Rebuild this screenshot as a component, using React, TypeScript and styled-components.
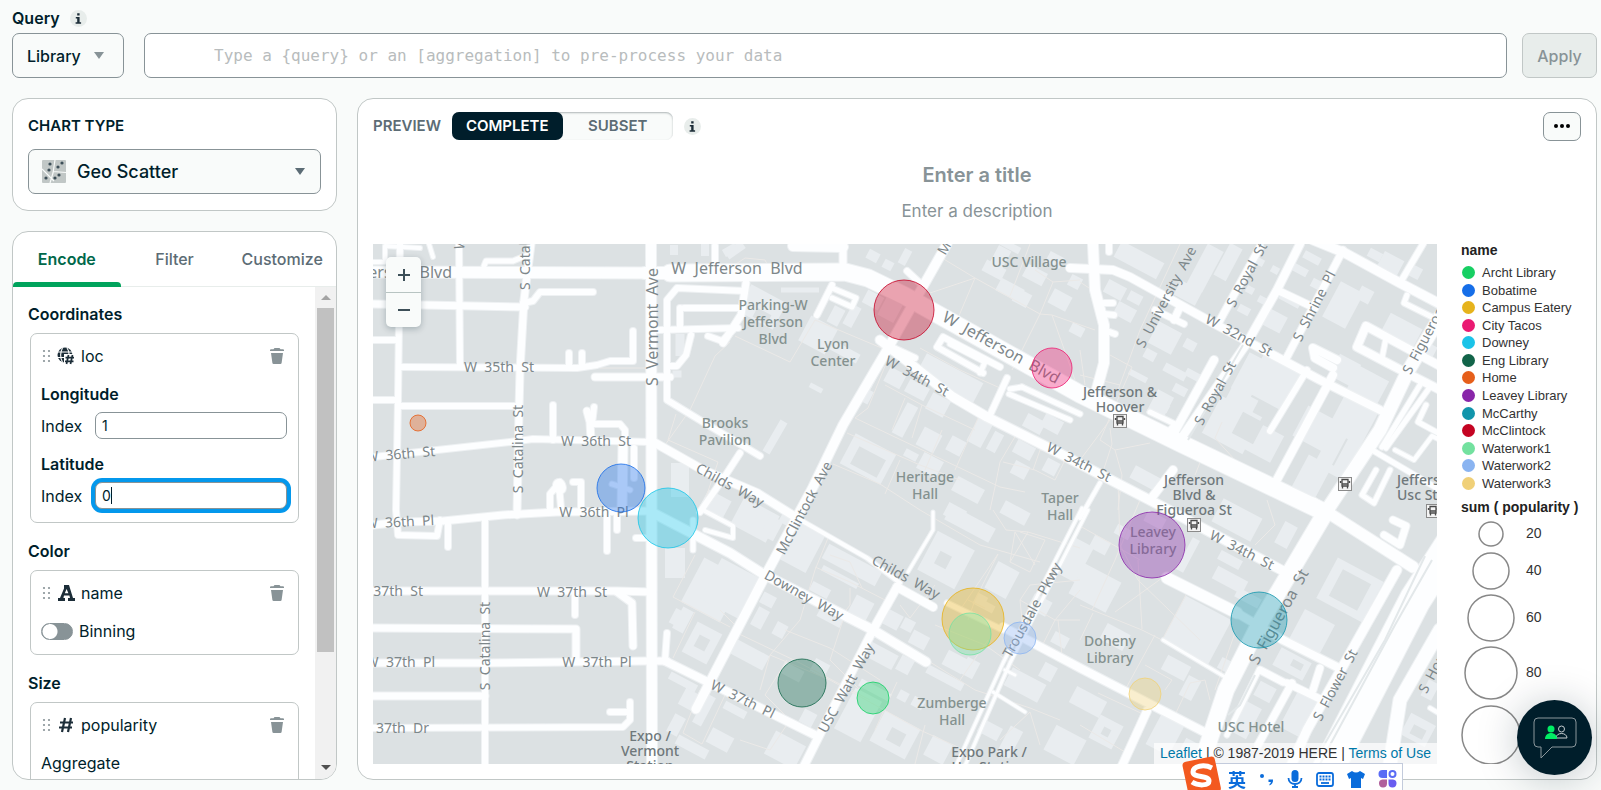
import React from 'react';
import styled, { createGlobalStyle, css } from 'styled-components';

const GlobalStyle = createGlobalStyle`
  *, *::before, *::after { box-sizing: border-box; }
  body {
    margin: 0;
    background: #f9fbfa;
    color: #001e2b;
    font-family: Inter, "Liberation Sans", sans-serif;
    font-size: 16px;
    line-height: 20px;
  }
  button, input, select { font: inherit; color: inherit; }
`;

/* ---------- page frame ---------- */

const Page = styled.div`
  display: flex;
  flex-direction: column;
  height: 100vh;
  min-height: 600px;
  padding: 8px 4px 10px 12px;
  overflow: hidden;
`;

const QueryHeading = styled.div`
  display: flex;
  align-items: center;
  gap: 10px;
  height: 20px;
  margin-bottom: 5px;
  font-weight: 600;
`;

const QueryRow = styled.div`
  display: flex;
  height: 45px;
  margin-bottom: 20px;
`;

const LibraryButton = styled.button`
  display: flex;
  align-items: center;
  justify-content: space-between;
  width: 112px;
  margin-right: 20px;
  padding: 0 19px 0 14px;
  border: 1px solid #889397;
  border-radius: 7px;
  background: #f9fbfa;
  font-weight: 500;
`;

const QueryInput = styled.input`
  flex: 1;
  min-width: 0;
  margin-right: 15px;
  padding: 0 69px;
  border: 1px solid #889397;
  border-radius: 7px;
  background: #fff;
  font-family: "DejaVu Sans Mono", monospace;
  &::placeholder { color: #b8bcbd; opacity: 1; }
`;

const ApplyButton = styled.button`
  width: 75px;
  padding: 0;
  border: 1px solid #c1c7c6;
  border-radius: 7px;
  background: #e8edeb;
  color: #889397;
  font-weight: 500;
`;

const Columns = styled.div`
  display: flex;
  flex: 1;
  gap: 20px;
  min-height: 0;
`;

const Sidebar = styled.aside`
  display: flex;
  flex-direction: column;
  flex: none;
  gap: 20px;
  width: 325px;
`;

const panel = css`
  border: 1px solid #c1c7c6;
  border-radius: 16px;
  background: #fff;
`;

const InfoBadge = styled.button`
  display: grid;
  place-items: center;
  width: 17px;
  height: 17px;
  padding: 0;
  border: 0;
  border-radius: 50%;
  background: #e8edeb;
`;

/* ---------- chart type ---------- */

const ChartTypePanel = styled.section`
  ${panel}
  height: 113px;
  padding: 17px 15px 0;
`;

const ChartTypeTitle = styled.label`
  display: block;
  margin-bottom: 13px;
  font-size: 15px;
  font-weight: 600;
`;

const SelectFrame = styled.div`
  display: grid;
  grid-template-columns: 48px 1fr 34px;
  align-items: center;
  height: 45px;
  border: 1px solid #889397;
  border-radius: 7px;
  background: #f9fbfa;
  & > svg { grid-row: 1; pointer-events: none; }
  & > svg:first-child { grid-column: 1; margin-left: 13px; }
  & > svg:last-child { grid-column: 3; z-index: 1; margin-left: 9px; }
`;

const ChartSelect = styled.select`
  grid-row: 1;
  grid-column: 2 / 4;
  width: 100%;
  height: 43px;
  padding: 0;
  border: 0;
  outline: 0;
  appearance: none;
  background: transparent;
  font-size: 18px;
  font-weight: 500;
`;

/* ---------- encode panel ---------- */

const EncodePanel = styled.section`
  ${panel}
  display: flex;
  flex: 1;
  flex-direction: column;
  min-height: 0;
  overflow: hidden;
`;

const Tabs = styled.div`
  display: flex;
  flex: none;
  height: 55px;
  border-bottom: 1px solid #e8edeb;
`;

const Tab = styled.button<{ $active?: boolean }>`
  position: relative;
  flex: 1;
  padding: 0;
  border: 0;
  background: none;
  color: ${p => (p.$active ? '#00684a' : '#5c6c75')};
  font-weight: ${p => (p.$active ? 600 : 500)};
  &::after {
    content: "";
    position: absolute;
    right: 0;
    bottom: -1px;
    left: 0;
    height: 5px;
    border-radius: 4px 4px 0 0;
    background: ${p => (p.$active ? '#00a35c' : 'transparent')};
  }
`;

const ScrollArea = styled.div`
  display: flex;
  flex: 1;
  min-height: 0;
`;

const Sections = styled.div`
  flex: 1;
  padding: 17px 15px 0;
  overflow: hidden;
`;

const ScrollTrack = styled.div`
  display: flex;
  flex-direction: column;
  align-items: center;
  justify-content: space-between;
  flex: none;
  width: 21px;
  padding: 8px 0 9px;
  background: #f1f1f1;
`;

const ScrollThumb = styled.div`
  flex: 0 1 344px;
  width: 17px;
  margin: 8px 0 auto;
  background: #c1c1c1;
`;

const SectionTitle = styled.h3`
  margin: 0 0 9px;
  font-size: 16px;
  font-weight: 600;
  line-height: 20px;
`;

const Card = styled.div`
  margin: 0 0 18px 2px;
  padding: 10px 11px 13px 10px;
  width: 269px;
  border: 1px solid #c1c7c6;
  border-radius: 7px;
`;

const FieldRow = styled.div`
  display: flex;
  align-items: center;
  height: 24px;
  & > svg:first-child { margin: 0 6px 0 1px; }
`;

const FieldName = styled.span`
  flex: 1;
  margin-left: 6px;
`;

const IconButton = styled.button`
  display: grid;
  place-items: center;
  width: 20px;
  height: 24px;
  padding: 0;
  border: 0;
  background: none;
`;

const AxisTitle = styled.div`
  margin: 16px 0 8px;
  font-weight: 600;
`;

const IndexLabel = styled.label`
  display: flex;
  align-items: center;
  justify-content: space-between;
  & + div { margin-top: 15px; }
`;

const IndexInput = styled.input<{ $focused?: boolean }>`
  width: 192px;
  height: 27px;
  padding: 0 6px;
  border: 1px solid #889397;
  border-radius: 7px;
  outline: 0;
  background: #fff;
  box-shadow: ${p => (p.$focused ? '0 0 0 4px #0498ec' : 'none')};
  font-size: 14px;
`;

const InputShell = styled.span`
  position: relative;
  display: flex;
`;

const Caret = styled.span`
  position: absolute;
  top: 5px;
  left: 16px;
  width: 1px;
  height: 17px;
  background: #001e2b;
`;

const SwitchLabel = styled.label`
  display: flex;
  align-items: center;
  gap: 6px;
  margin-top: 16px;
`;

const Switch = styled.input`
  width: 32px;
  height: 17px;
  margin: 0;
  border: 1px solid #889397;
  border-radius: 9px;
  appearance: none;
  background: radial-gradient(circle at 8px 50%, #fff 7px, #889397 8px);
`;

const PlainLabel = styled.div`
  margin-top: 16px;
`;

/* ---------- preview ---------- */

const Preview = styled.main`
  ${panel}
  display: flex;
  flex: 1;
  flex-direction: column;
  min-width: 0;
  padding: 12px 15px 15px;
`;

const PreviewBar = styled.div`
  display: flex;
  align-items: center;
  height: 30px;
  color: #5c6c75;
  font-weight: 600;
`;

const PreviewLabel = styled.span`
  width: 79px;
  font-size: 15px;
`;

const Segments = styled.div`
  display: flex;
  width: 221px;
  height: 28px;
  margin-right: 11px;
  border-radius: 7px;
  background: #f9fbfa;
  box-shadow: inset 0 1px 2px #aeb5b6;
`;

const Segment = styled.button<{ $active?: boolean }>`
  flex: 1;
  padding: 0;
  border: 0;
  border-radius: 7px;
  background: ${p => (p.$active ? '#001e2b' : 'transparent')};
  color: ${p => (p.$active ? '#fff' : '#5c6c75')};
  font-size: 15px;
  font-weight: 600;
`;

const MoreButton = styled.button`
  display: grid;
  place-items: center;
  width: 38px;
  height: 29px;
  margin-left: auto;
  padding: 0;
  border: 1px solid #889397;
  border-radius: 7px;
  background: #f9fbfa;
`;

const ChartTitle = styled.h1`
  margin: 20px 0 0;
  color: #889397;
  font-size: 20px;
  font-weight: 600;
  line-height: 28px;
  text-align: center;
`;

const ChartDescription = styled.p`
  margin: 8px 0 19px;
  color: #889397;
  font-size: 17px;
  line-height: 28px;
  text-align: center;
`;

const ChartBody = styled.div`
  display: flex;
  flex: 1;
  min-height: 0;
`;

const MapFrame = styled.div`
  position: relative;
  flex: 1;
  min-width: 0;
  overflow: hidden;
  background: #dce1e3;
`;

const MapSvg = styled.svg`
  display: block;
  width: 100%;
  height: 100%;
`;

const StreetName = styled.text<{ $major?: boolean }>`
  fill: #7d878a;
  font: ${p => (p.$major ? 16 : 14)}px/1 "Noto Sans", sans-serif;
  white-space: pre;
`;

const PlaceName = styled.text<{ $station?: boolean }>`
  fill: ${p => (p.$station ? '#6f787b' : '#84918f')};
  font: 500 14px/1 "Noto Sans", sans-serif;
  white-space: pre;
`;

const ZoomControl = styled.div`
  position: absolute;
  top: 13px;
  left: 13px;
  display: flex;
  flex-direction: column;
  width: 35px;
  border-radius: 5px;
  background: #f9fbfa;
  box-shadow: 0 2px 6px rgba(0, 30, 43, 0.25);
`;

const ZoomButton = styled.button`
  display: grid;
  place-items: center;
  height: 35px;
  padding: 0;
  border: 0;
  background: none;
  & + & { border-top: 1px solid #b8c4c2; }
`;

const Attribution = styled.div`
  position: absolute;
  right: 0;
  bottom: 0;
  padding: 0 6px;
  background: rgba(255, 255, 255, 0.7);
  color: #333;
  font: 14px/21px "Liberation Sans", sans-serif;
  & a { color: #0078a8; text-decoration: none; }
`;

const Legend = styled.div`
  flex: none;
  width: 144px;
  padding-left: 24px;
  overflow: hidden;
  color: #333;
  font: 13px/17px "Liberation Sans", sans-serif;
`;

const LegendTitle = styled.div`
  height: 17px;
  margin-top: -2px;
  margin-bottom: 5px;
  color: #222;
  font-size: 14px;
  font-weight: 700;
  white-space: nowrap;
  & + svg { display: block; }
`;

const LegendList = styled.ul`
  display: grid;
  grid-template-rows: repeat(13, 1fr);
  height: 228px;
  margin: 0 0 9px;
  padding: 0 0 0 1px;
  list-style: none;
`;

const LegendItem = styled.li<{ $color: string }>`
  display: flex;
  align-items: center;
  gap: 7px;
  &::before {
    content: "";
    width: 13px;
    height: 13px;
    border-radius: 50%;
    background: ${p => p.$color};
  }
`;

const LegendNumber = styled.text`
  fill: #333;
  font: 14px "Liberation Sans", sans-serif;
`;

/* ---------- floating pieces ---------- */

const ChatButton = styled.button`
  position: fixed;
  right: 9px;
  bottom: 15px;
  display: grid;
  place-items: center;
  width: 75px;
  height: 75px;
  padding: 0;
  border: 0;
  border-radius: 50%;
  background: #001e2b;
  box-shadow: 0 4px 40px rgba(0, 30, 43, 0.25);
`;

const ImeBar = styled.div`
  position: fixed;
  right: 198px;
  bottom: 0;
  display: flex;
  align-items: center;
  justify-content: space-between;
  width: 206px;
  height: 27px;
  padding: 4px 5px 0 30px;
  border: 1px solid #c3cbdc;
  border-bottom: 0;
  background: #fff;
  color: #0a6cdb;
  font: 700 18px/20px "Noto Sans CJK SC", sans-serif;
`;

const ImeLogo = styled.svg`
  position: absolute;
  bottom: -8px;
  left: -17px;
`;

/* ---------- map data ---------- */

type Street = [number, string];

const streets: Street[] = [
  [12, '373,272 650,273'],
  [18, '670,273 845,272 868,278 905,296 1080,394 1180,443 1320,510'],
  [13, '645,273 690,273'],
  [11, '651,240 652,764'],
  [7, '400,244 398,400 396,510 398,535 437,536 440,520'],
  [7, '459,244 460,367'],
  [8, '531,244 524,300 520,370 519,410 517,515'],
  [8, '373,304 525,307'],
  [7, '373,340 398,340'],
  [7, '400,367 577,368 597,365 610,361 633,361 633,331'],
  [7, '569,353 569,367'],
  [7, '582,353 582,367'],
  [8, '595,377 670,377'],
  [7, '373,400 398,400'],
  [7, '400,406 517,406'],
  [7, '373,457 410,453 510,442 533,439 650,442'],
  [7, '553,405 553,440'],
  [8, '587,411 590,422 591,440'],
  [7, '594,407 592,424 620,424 625,430 625,440'],
  [6, '484,266 486,261 513,261 530,254'],
  [7, '593,292 540,292 533,301 523,303'],
  [5, '373,262 385,262 385,246 420,248'],
  [5, '429,244 433,257'],
  [7, '485,518 485,764'],
  [8, '373,525 403,522 443,521 503,515 557,512 652,511'],
  [7, '448,522 448,547'],
  [7, '550,512 550,494 560,482'],
  [13, '559,485 560,488'],
  [7, '559,485 561,508'],
  [7, '573,482 581,482 581,508'],
  [10, '623,447 622,510'],
  [7, '634,448 634,478'],
  [6, '612,484 630,490'],
  [7, '607,513 607,551'],
  [7, '617,513 617,530'],
  [7, '636,538 652,538'],
  [8, '373,591 617,591 652,592'],
  [8, '617,592 632,603 633,646'],
  [7, '575,593 575,615'],
  [8, '373,628 576,629 576,660'],
  [8, '373,663 485,663 647,661 667,661'],
  [9, '665,661 720,688 817,736'],
  [7, '667,633 665,660'],
  [8, '373,696 485,696'],
  [7, '373,728 623,727 630,720 630,702'],
  [7, '610,712 630,712'],
  [10, '947,244 900,327 887,350 843,425 813,487 763,580 696,709'],
  [9, '897,587 873,630 817,740 803,768'],
  [9, '650,440 703,470 757,493 797,518'],
  [5, '797,518 867,558 900,583'],
  [9, '897,587 933,607'],
  [6, '947,603 1003,630'],
  [9, '1003,627 1080,668 1210,735'],
  [10, '653,513 730,553 763,574 873,630 926,662'],
  [7, '745,291 677,288 667,300 667,400 703,422 760,456'],
  [7, '740,453 727,473 700,512'],
  [7, '680,308 680,327'],
  [7, '684,308 742,308'],
  [7, '658,330 738,328'],
  [8, '746,283 741,315 723,343'],
  [7, '691,335 686,355 677,366 667,366'],
  [7, '708,336 722,341 733,330'],
  [5, '703,510 733,526 733,538 705,530'],
  [6, '693,520 693,550'],
  [8, '843,244 843,270'],
  [11, '793,246 843,247'],
  [7, '715,246 715,270'],
  [7, '832,285 817,315'],
  [6, '832,288 856,298 852,307 832,298'],
  [10, '880,340 953,397 987,417 1053,450 1080,464 1163,507 1287,573'],
  [7, '887,345 915,358'],
  [7, '983,373 937,347 943,337 1000,367'],
  [6, '950,344 985,362 980,373'],
  [7, '1007,378 990,415'],
  [6, '1009,394 1070,420'],
  [6, '1022,387 1080,414'],
  [6, '1010,389 1022,387'],
  [7, '907,271 922,285'],
  [11, '1093,244 1095,290 1104,325 1104,363 1095,396'],
  [9, '1070,268 1113,270 1130,277 1213,323 1320,380 1380,410'],
  [7, '1109,244 1109,252'],
  [7, '1104,303 1113,303'],
  [7, '1104,314 1114,315'],
  [7, '1104,330 1115,334'],
  [7, '1155,310 1184,324'],
  [8, '1180,307 1174,320'],
  [9, '1300,244 1277,290 1247,343 1180,440'],
  [9, '1214,360 1174,433'],
  [8, '1260,247 1219,322'],
  [8, '1277,290 1315,308'],
  [8, '1343,250 1287,357'],
  [10, '1313,240 1345,253 1400,283 1440,304'],
  [7, '1423,244 1400,283'],
  [6, '1407,295 1404,303 1440,321'],
  [6, '1150,412 1175,424 1166,434'],
  [7, '1307,370 1270,431'],
  [9, '1333,375 1273,487'],
  [9, '1333,368 1315,358 1313,348 1337,360'],
  [14, '1440,317 1407,373 1380,430 1327,510'],
  [17, '1327,510 1260,623 1226,690 1200,768'],
  [9, '1440,390 1397,368 1357,347 1366,326 1440,366'],
  [6, '1386,338 1382,358'],
  [6, '1367,447 1440,490'],
  [6, '1430,387 1386,448'],
  [6, '1420,385 1382,447'],
  [5, '1395,450 1414,460 1432,436 1440,440'],
  [6, '1426,405 1418,422 1440,434'],
  [6, '1376,470 1362,495 1374,503 1390,470'],
  [12, '1313,503 1413,567'],
  [8, '1393,520 1406,526 1400,545 1384,535'],
  [10, '1397,570 1307,730 1290,768'],
  [32, '1460,530 1415,600 1325,775'],
  [14, '1440,630 1400,700 1390,764'],
  [12, '1167,578 1237,613'],
  [9, '1237,613 1283,640 1337,667'],
  [8, '1260,670 1283,682'],
  [8, '1287,683 1320,699'],
  [8, '1292,683 1258,745'],
  [8, '1320,668 1313,690'],
  [6, '1258,672 1227,735'],
  [4, '1163,640 1225,677 1230,690'],
  [4, '1082,508 1003,663 955,768'],
  [4, '1088,510 1010,663 964,768'],
  [4, '1005,670 1015,675'],
  [4, '993,692 1025,712'],
  [9, '1147,711 1121,768'],
  [4, '933,512 933,530 908,572'],
  [9, '1173,470 1153,496'],
  [5, '1100,483 1080,518'],
  [5, '1430,708 1450,720'],
];

type Block = [number, number, number, number, number?];

const blocks: Block[] = [
  [674, 250, 8, 10, 0], [705, 250, 8, 12, 0], [735, 250, 20, 9, -35], [680, 345, 9, 22, 0], [677, 374, 9, 7, 0],
  [680, 480, 18, 34, 0], [675, 563, 20, 30, 0], [712, 590, 44, 50], [702, 643, 28, 34], [676, 617, 8, 16],
  [683, 620, 12, 24], [683, 682, 30, 8], [690, 700, 18, 18], [704, 710, 10, 32], [676, 725, 12, 20],
  [692, 747, 34, 10], [720, 740, 24, 16], [715, 505, 26, 22], [755, 520, 40, 30],
  [762, 307, 40, 30], [800, 290, 38, 5, 0], [818, 335, 30, 28], [836, 316, 12, 18], [845, 352, 30, 10], [852, 316, 10, 22],
  [730, 250, 14, 8, -30], [775, 437, 8, 36, 30], [816, 388, 14, 5], [873, 300, 18, 14], [890, 310, 18, 20],
  [873, 256, 12, 10], [888, 265, 10, 9], [905, 257, 8, 16], [950, 378, 64, 22], [870, 382, 8, 16], [868, 397, 6, 14],
  [895, 378, 18, 16], [917, 390, 22, 14], [938, 405, 20, 18], [905, 420, 12, 34], [929, 440, 20, 20], [956, 446, 16, 16],
  [980, 432, 16, 28], [995, 442, 10, 20], [1024, 450, 20, 14], [1020, 470, 16, 14], [1034, 424, 20, 14], [1052, 424, 20, 14],
  [868, 459, 46, 34], [911, 455, 14, 8], [930, 465, 22, 18], [968, 490, 30, 16], [1051, 467, 14, 14], [1015, 513, 28, 14],
  [970, 524, 50, 16], [955, 513, 20, 14], [800, 545, 36, 44], [760, 522, 12, 22], [775, 530, 7, 22], [787, 518, 12, 14],
  [852, 565, 60, 16], [840, 577, 40, 6], [946, 560, 42, 44], [1002, 580, 24, 30], [985, 603, 22, 12],
  [820, 590, 20, 10], [830, 618, 26, 9], [861, 608, 20, 20], [893, 620, 16, 16], [908, 625, 12, 12], [919, 640, 18, 14],
  [768, 600, 14, 12], [760, 618, 12, 20], [780, 630, 12, 14], [733, 590, 50, 46], [750, 655, 36, 16], [792, 672, 22, 12],
  [820, 668, 16, 14], [880, 655, 34, 16], [905, 665, 14, 16], [945, 678, 40, 9], [955, 662, 22, 16], [970, 668, 14, 18],
  [858, 715, 30, 46], [875, 690, 34, 8], [903, 696, 10, 10], [918, 703, 12, 10], [895, 735, 40, 34], [938, 750, 22, 22],
  [785, 750, 34, 26], [808, 718, 14, 14], [735, 710, 24, 8], [1025, 685, 38, 20], [1048, 672, 14, 16], [990, 730, 22, 14],
  [1010, 742, 14, 30], [1065, 745, 34, 28], [1040, 605, 20, 16], [1075, 560, 22, 40], [1060, 640, 16, 12],
  [994, 270, 22, 12], [1010, 290, 26, 14], [1000, 258, 14, 22], [1035, 275, 22, 14], [1022, 298, 16, 14], [1060, 300, 20, 16],
  [1055, 260, 16, 12], [1075, 282, 12, 12], [1077, 330, 14, 10], [1010, 246, 22, 7],
  [1139, 260, 48, 18], [1115, 290, 20, 14], [1135, 298, 14, 10], [1125, 312, 20, 14], [1205, 268, 18, 46], [1188, 293, 24, 16],
  [1165, 338, 26, 24], [1150, 355, 12, 10], [1190, 345, 12, 10], [1138, 376, 20, 6], [1175, 372, 24, 9], [1180, 390, 14, 9],
  [1193, 375, 16, 8], [1160, 405, 18, 26], [1163, 407, 12, 8], [1228, 262, 14, 36], [1260, 262, 8, 7], [1275, 270, 8, 7],
  [1250, 290, 8, 7], [1262, 300, 8, 7], [1244, 310, 12, 8], [1273, 320, 24, 18], [1250, 375, 22, 40], [1275, 380, 44, 48],
  [1232, 425, 46, 42], [1263, 442, 32, 30], [1242, 400, 30, 14], [1300, 270, 16, 8], [1318, 285, 14, 9], [1312, 258, 18, 8],
  [1343, 305, 26, 40], [1365, 295, 14, 14], [1290, 300, 22, 8], [1390, 265, 22, 20], [1375, 255, 14, 9], [1415, 272, 12, 12],
  [1345, 370, 24, 24], [1368, 385, 34, 26], [1352, 422, 38, 46], [1318, 430, 40, 34], [1310, 480, 26, 44], [1338, 455, 34, 40],
  [1402, 330, 36, 20], [1425, 350, 20, 16], [1350, 590, 52, 46], [1312, 632, 34, 34], [1237, 520, 44, 26], [1286, 535, 14, 24],
  [1230, 580, 34, 14], [1248, 598, 26, 10], [1230, 560, 24, 10], [1188, 555, 8, 36], [1145, 478, 28, 14],
  [1197, 630, 52, 50], [1095, 588, 42, 34], [1100, 545, 18, 14], [1155, 520, 20, 12], [1123, 532, 16, 10],
  [1292, 664, 34, 20], [1265, 692, 18, 16], [1300, 715, 26, 40], [1246, 720, 18, 34], [1176, 668, 26, 16], [1190, 688, 14, 22],
  [1115, 637, 26, 18], [1103, 680, 14, 8], [1088, 702, 34, 18], [1106, 732, 26, 26], [1165, 735, 26, 34], [1190, 750, 18, 18],
  [1418, 730, 28, 24], [1430, 690, 12, 18], [1225, 665, 12, 12],
];

const cutouts: Block[] = [
  [943, 560, 13, 14], [702, 643, 12, 13], [994, 600, 12, 10], [868, 462, 30, 20], [1350, 590, 32, 30], [1297, 665, 12, 7],
  [1340, 452, 2, 30], [1248, 428, 24, 24], [896, 737, 16, 14], [762, 316, 16, 10], [1106, 732, 8, 8], [1418, 732, 14, 10],
];

const trails: string[] = [
  '600,368 648,368', '730,342 715,356 690,410 665,445', '676,414 668,440 718,462 705,500', '735,336 790,362 815,320 910,360',
  '730,268 745,258 765,260 770,270', '885,366 868,408 855,418', '942,258 975,278 930,293', '975,278 958,318',
  '975,278 1040,314 1052,315 1095,330', '1040,314 1012,370', '1052,315 1075,380', '1010,296 1030,244', '1035,270 1053,282 1080,280',
  '1053,282 1040,314', '855,418 1000,487 1025,492', '847,433 920,465 960,480', '905,398 892,430', '920,348 960,370 1000,388',
  '885,385 922,405 912,438', '922,405 975,430', '978,418 955,470', '942,430 925,470', '1016,435 1000,462 995,487 990,510',
  '1003,462 1035,470 1055,480 1070,450', '1033,470 1040,450 1060,448 1080,460', '900,460 885,494',
  '833,464 880,484 920,510 980,545 1040,562', '993,510 1006,530 1028,532 1080,548', '1028,532 1010,562 1030,572 1045,540 1020,532',
  '1010,562 1015,532 1035,565', '998,554 975,600 968,620', '998,554 960,610', '968,600 985,608',
  '828,538 815,570 800,620 770,655 760,690', '815,567 850,582 885,600', '850,588 850,605 840,618',
  '830,555 850,562 862,588', '785,630 830,648 880,680', '843,620 830,660 860,690', '735,632 800,663 870,700',
  '720,610 740,630', '770,655 830,680 920,730 960,748', '787,660 765,695 790,720 770,750 740,740',
  '900,605 910,618 935,585', '935,625 985,645 1020,670', '988,640 960,680', '930,662 975,690 1030,708 1060,720',
  '897,682 875,730', '925,725 915,764', '1000,740 1030,712 1040,745', '1020,600 1055,620 1080,620',
  '1020,600 1030,585 1080,580', '1055,620 1080,590', '1058,620 1062,655 1080,670', '1055,620 1040,650', '1024,640 1020,600',
  '695,555 673,597 730,627', '695,612 673,658', '700,690 683,733 702,744 725,695',
  '1180,244 1140,330 1118,390', '1080,282 1095,292', '1110,355 1132,367 1100,440 1115,450 1150,443',
  '1110,428 1112,444 1097,490', '1115,450 1122,475 1118,510', '1080,460 1110,420', '1080,350 1085,385',
  '1080,375 1120,385', '1118,480 1120,545 1138,580 1200,640', '1138,560 1142,629', '1140,500 1115,560 1092,610',
  '1115,612 1180,565', '1080,526 1140,560', '1080,605 1142,630 1162,640', '1187,593 1162,640', '1155,635 1125,690',
  '1236,630 1215,690', '1098,693 1145,715', '1145,665 1172,680 1165,690', '1190,683 1205,680 1210,700',
  '1190,683 1175,715', '1267,500 1275,525 1255,545', '1222,422 1215,438 1235,460', '1205,450 1195,475',
  '1093,613 1080,640', '1080,725 1130,755',
];

type Label = { t: string; x: number; y: number; r?: number; a?: 'start' | 'end'; major?: boolean };

const streetNames: Label[] = [
  { t: 'Jefferson  Blvd', x: 452, y: 273, a: 'end', major: true },
  { t: 'W  Jefferson  Blvd', x: 737, y: 269, major: true },
  { t: 'S  Catalina', x: 525, y: 290, r: -90, a: 'start' },
  { t: 'W', x: 460, y: 243, r: -80 },
  { t: 'S  Vermont  Ave', x: 653, y: 327, r: -90, major: true },
  { t: 'W  35th  St', x: 499, y: 367 },
  { t: 'S  Catalina  St', x: 518, y: 449, r: -90 },
  { t: 'W  36th  St', x: 435, y: 451, r: -5, a: 'end' },
  { t: 'W  36th  St', x: 596, y: 441 },
  { t: 'W  36th  Pl', x: 434, y: 520, r: -3, a: 'end' },
  { t: 'W  36th  Pl', x: 594, y: 512 },
  { t: 'W  37th  St', x: 423, y: 591, a: 'end' },
  { t: 'W  37th  St', x: 572, y: 592 },
  { t: 'S  Catalina  St', x: 485, y: 646, r: -90 },
  { t: 'W  37th  Pl', x: 435, y: 662, a: 'end' },
  { t: 'W  37th  Pl', x: 597, y: 662 },
  { t: 'W  37th  Dr', x: 429, y: 728, a: 'end' },
  { t: 'Childs  Way', x: 730, y: 485, r: 29 },
  { t: 'McClintock  Ave', x: 804, y: 508, r: -62 },
  { t: 'Downey  Way', x: 804, y: 595, r: 29 },
  { t: 'Childs  Way', x: 906, y: 577, r: 29 },
  { t: 'USC  Watt  Way', x: 846, y: 688, r: -61 },
  { t: 'Trousdale  Pkwy', x: 1032, y: 610, r: -61 },
  { t: 'W  37th  Pl', x: 743, y: 699, r: 26 },
  { t: 'W  Jefferson  Blvd', x: 1001, y: 348, r: 29, major: true },
  { t: 'W  34th  St', x: 917, y: 376, r: 28 },
  { t: 'W  34th  St', x: 1079, y: 462, r: 27 },
  { t: 'W  34th  St', x: 1242, y: 550, r: 27 },
  { t: 'M', x: 944, y: 248, r: -60 },
  { t: 'S  University  Ave', x: 1166, y: 297, r: -62 },
  { t: 'S  Royal  St', x: 1230, y: 306, r: -62, a: 'start' },
  { t: 'W  32nd  St', x: 1239, y: 335, r: 28 },
  { t: 'S  Royal  St', x: 1215, y: 393, r: -61 },
  { t: 'S  Shrine  Pl', x: 1314, y: 306, r: -63 },
  { t: 'S  Figueroa  St', x: 1406, y: 373, r: -62, a: 'start' },
  { t: 'S  Figueroa  St', x: 1279, y: 617, r: -61, major: true },
  { t: 'S  Flower  St', x: 1335, y: 685, r: -62 },
  { t: 'S  Hope  St', x: 1422, y: 692, r: -62, a: 'start' },
];

type Place = { x: number; y: number; lines: string[]; station?: boolean; start?: boolean };

const places: Place[] = [
  { x: 773, y: 310, lines: ['Parking-W', 'Jefferson', 'Blvd'] },
  { x: 833, y: 349, lines: ['Lyon', 'Center'] },
  { x: 725, y: 428, lines: ['Brooks', 'Pavilion'] },
  { x: 1029, y: 267, lines: ['USC Village'] },
  { x: 925, y: 482, lines: ['Heritage', 'Hall'] },
  { x: 1060, y: 503, lines: ['Taper', 'Hall'] },
  { x: 1110, y: 646, lines: ['Doheny', 'Library'] },
  { x: 1153, y: 537, lines: ['Leavey', 'Library'] },
  { x: 952, y: 708, lines: ['Zumberge', 'Hall'] },
  { x: 1251, y: 732, lines: ['USC Hotel'] },
  { x: 650, y: 741, lines: ['Expo /', 'Vermont', 'Station'], station: true },
  { x: 989, y: 757, lines: ['Expo Park /', 'Usc Station'], station: true },
  { x: 1120, y: 397, lines: ['Jefferson &', 'Hoover'], station: true },
  { x: 1194, y: 485, lines: ['Jefferson', 'Blvd &', 'Figueroa St'], station: true },
  { x: 1397, y: 485, lines: ['Jefferson', 'Usc Station'], station: true, start: true },
];

const stops = [[1120, 421], [1345, 484], [1194, 525], [1433, 511]];

const bubbles: [number, number, number, string][] = [
  [904, 310, 30, '#c70325'],
  [1052, 368, 20, '#ee1c71'],
  [418, 423, 8, '#e75c16'],
  [621, 488, 24, '#176be8'],
  [668, 518, 30, '#17c5e8'],
  [973, 619, 31, '#e8b217'],
  [970, 634, 21, '#74e2a2'],
  [1020, 638, 16, '#8cb5f2'],
  [802, 683, 24, '#11664a'],
  [873, 698, 16, '#14d165'],
  [1152, 545, 33, '#8a26aa'],
  [1259, 620, 28, '#1296ae'],
  [1145, 694, 16, '#f1d277'],
];

const legend: [string, string][] = [
  ['Archt Library', '#17cf63'],
  ['Bobatime', '#166ee8'],
  ['Campus Eatery', '#e6b31c'],
  ['City Tacos', '#ea1a72'],
  ['Downey', '#1bc3e8'],
  ['Eng Library', '#126449'],
  ['Home', '#e65f1a'],
  ['Leavey Library', '#8926a9'],
  ['McCarthy', '#1195ab'],
  ['McClintock', '#c40422'],
  ['Waterwork1', '#73e19f'],
  ['Waterwork2', '#8ab4f1'],
  ['Waterwork3', '#f0d078'],
];

const sizes: [number, number, string][] = [
  [13, 12, '20'],
  [50, 18, '40'],
  [97, 23, '60'],
  [152, 26, '80'],
  [214, 29, '100'],
];

/* ---------- icons ---------- */

const Triangle = ({ color, up, w = 10, h = 7 }: { color: string; up?: boolean; w?: number; h?: number }) => (
  <svg width={w} height={h} viewBox="0 0 10 6" preserveAspectRatio="none" aria-hidden="true">
    <path d={up ? 'M0 6 5 0l5 6z' : 'M0 0h10L5 6z'} fill={color} />
  </svg>
);

const InfoIcon = () => (
  <svg width="7" height="11" viewBox="0 0 7 11" aria-hidden="true">
    <path d="M2.2.3h2.4v2.2H2.2zM.8 4h3.8v5.2h1.5v1.5H.6V9.2h1.6V5.5H.8z" fill="#1c2d38" />
  </svg>
);

const GeoScatterIcon = () => (
  <svg width="24" height="23" viewBox="0 0 24 23" aria-hidden="true">
    <rect width="24" height="23" rx="1" fill="#c1c7c6" />
    <path d="M13 0 11 13 8 23M0 9l12 12M11 11.5l13 1" stroke="#f9fbfa" strokeWidth="1.2" fill="none" />
    <g fill="#3d4f58">
      <circle cx="8" cy="4" r="1.6" /><circle cx="20" cy="3" r="1.6" /><circle cx="16" cy="7" r="1.6" />
      <circle cx="7" cy="10" r="1.6" /><circle cx="17" cy="15" r="1.6" /><circle cx="4" cy="18" r="1.6" />
      <circle cx="13" cy="18" r="1.6" />
    </g>
  </svg>
);

const DragDots = () => (
  <svg width="9" height="14" viewBox="0 0 9 14" aria-hidden="true">
    {[2, 7, 12].map(y => [2, 7].map(x => <circle key={`${x}-${y}`} cx={x} cy={y} r="1.1" fill="#889397" />))}
  </svg>
);

const TypeIcon = ({ kind }: { kind: 'geo' | 'string' | 'number' }) => (
  <svg width="18" height="18" viewBox="0 0 18 18" aria-hidden="true">
    {kind === 'number' && (
      <path d="M8 2 5 16M14 2l-3 14M3 6.5h13M2 11.5h13" stroke="#1c2d38" strokeWidth="2.2" fill="none" />
    )}
    {kind === 'string' && (
      <path
        d="M7 1h5l4 13h2v3h-7v-3h2l-.6-2.4H7L6.4 14H8v3H1v-3h2L7 4.500zM9.6 5 7.800 9.200h3.600z"
        fill="#1c2d38"
        fillRule="evenodd"
      />
    )}
    {kind === 'geo' && (
      <g>
        <circle cx="8" cy="8" r="7.5" fill="#1c2d38" />
        <path d="M5.5 1C3 5 3 11 5.500 15M10 1c1.5 2 2 4 2 6M1 5h14M0 10.500h8" stroke="#fff" strokeWidth="1.1" fill="none" />
        <path d="M7 7h11v11H7z" fill="#fff" />
        <path d="m11.5 8-2 9M15.500 8l-2 9M8.500 10.700H17M8 14.300h8.500" stroke="#1c2d38" strokeWidth="1.7" />
      </g>
    )}
  </svg>
);

const Trash = () => (
  <svg width="14" height="16" viewBox="0 0 14 16" aria-hidden="true">
    <path d="M4.5 0h5l1 1.200H13q1 0 1 1V3H0v-.8q0-1 1-1h2.500zM1 5h12l-1.400 10q-.2 1-1.200 1H3.600q-1 0-1.200-1z" fill="#889397" />
  </svg>
);

const Info = ({ about }: { about: string }) => (
  <InfoBadge aria-label={about}><InfoIcon /></InfoBadge>
);

/* ---------- composed parts ---------- */

const Field = ({ kind, name }: { kind: 'geo' | 'string' | 'number'; name: string }) => (
  <FieldRow>
    <DragDots />
    <TypeIcon kind={kind} />
    <FieldName>{name}</FieldName>
    <IconButton aria-label={`Remove ${name}`}><Trash /></IconButton>
  </FieldRow>
);

const rect = ([cx, cy, w, h, r = 28]: Block, i: number) => (
  <rect key={i} x={cx - w / 2} y={cy - h / 2} width={w} height={h} transform={`rotate(${r} ${cx} ${cy})`} />
);

const CampusMap = () => (
  <MapSvg viewBox="373 244 1064 520" preserveAspectRatio="xMidYMid slice" role="img" aria-label="Campus map">
    <g fill="#e9edf0">{blocks.map(rect)}</g>
    <g fill="#dce1e3">{cutouts.map(rect)}</g>
    <g fill="none" stroke="#ebe9e7" strokeWidth="1">
      {trails.map(p => <polyline key={p} points={p} />)}
    </g>
    <g fill="none" stroke="#eef1f3" strokeLinecap="round" strokeLinejoin="round">
      {streets.map(([w, p]) => <polyline key={p} points={p} strokeWidth={w + 1} />)}
    </g>
    <g fill="none" stroke="#fdfeff" strokeLinecap="round" strokeLinejoin="round">
      {streets.map(([w, p]) => <polyline key={p} points={p} strokeWidth={w - 1} />)}
    </g>
    <g fill="none" stroke="#e3e8ea" strokeWidth="2">
      <polyline points="1432,560 1395,625 1330,745 1318,768" />
      <polyline points="1425,556 1385,640 1320,752" />
      <polyline points="1243,345 1188,440" />
      <polyline points="1255,675 1240,705 1228,715" />
    </g>
    {streetNames.map(({ t, x, y, r = 0, a, major }, i) => (
      <StreetName key={i} $major={major} x={x} y={y} dy="5" textAnchor={a ?? 'middle'} transform={`rotate(${r} ${x} ${y})`}>{t}</StreetName>
    ))}
    {places.map(({ x, y, lines, station, start }) =>
      lines.map((line, i) => (
        <PlaceName key={`${x}${line}`} $station={station} x={x} y={y + i * (station ? 15 : 17)} textAnchor={start ? 'start' : 'middle'}>
          {line}
        </PlaceName>
      )),
    )}
    {stops.map(([x, y]) => (
      <g key={x} transform={`translate(${x - 7} ${y - 7})`}>
        <rect x=".5" y=".5" width="13" height="13" fill="#f4f4f4" stroke="#8a8a8a" />
        <path d="M4 2.5h6v6.5H4zM2.5 4v2M11.5 4v2M4.5 9v2.5M9.5 9v2.5M4 7h6" fill="none" stroke="#4a4a4a" strokeWidth="1.3" />
      </g>
    ))}
    {bubbles.map(([x, y, r, color]) => (
      <circle key={color} cx={x} cy={y} r={r} fill={color} fillOpacity=".36" stroke={color} strokeOpacity=".8" />
    ))}
  </MapSvg>
);

const Ime = () => (
  <ImeBar>
    <ImeLogo width="42" height="42" viewBox="0 0 42 42" aria-hidden="true">
      <rect x="4" y="3" width="33" height="36" rx="4" fill="#f3591f" transform="rotate(-12 20 20)" />
      <path d="M31 12c-8-4-19-2-19 4 0 6 16 3 16 9 0 5-11 5-17 1" fill="none" stroke="#fff" strokeWidth="5" />
    </ImeLogo>
    <span>英</span>
    <svg width="15" height="14" viewBox="0 0 15 14" aria-hidden="true">
      <circle cx="3" cy="4" r="2" fill="#0a6cdb" />
      <path d="M9.5 7.5h4.5c.3 3-1 5-3.500 6v-1.500c1-.5 1.300-1 1.300-2h-2.300z" fill="#0a6cdb" />
    </svg>
    <svg width="16" height="18" viewBox="0 0 16 18" aria-hidden="true">
      <rect x="4.5" width="7" height="12" rx="3.5" fill="#0a6cdb" />
      <path d="M1.5 8c0 8 13 8 13 0M8 14v3M5 17h6" fill="none" stroke="#0a6cdb" strokeWidth="1.8" />
    </svg>
    <svg width="18" height="15" viewBox="0 0 18 15" aria-hidden="true">
      <rect x="1" y="1" width="16" height="13" rx="2" fill="none" stroke="#0a6cdb" strokeWidth="1.8" />
      <path d="M3.5 4.5h11M3.5 7.5h11" stroke="#0a6cdb" strokeWidth="1.8" strokeDasharray="2 1" />
      <path d="M5 11h8" stroke="#0a6cdb" strokeWidth="1.8" />
    </svg>
    <svg width="18" height="17" viewBox="0 0 18 17" aria-hidden="true">
      <path d="M5 0q4 3 8 0l5 3-2 5-2-1v10H4V7L2 8 0 3z" fill="#0a6cdb" />
    </svg>
    <svg width="19" height="18" viewBox="0 0 19 18" aria-hidden="true">
      <path d="M4.500 0H9v8H4.500a4 4 0 0 1 0-8z" fill="#5a6cf5" />
      <path d="M4.500 9.500H9v4a4 4 0 1 1-4.500-4z" fill="#b0609c" />
      <path d="M10.500 9.500H15a4 4 0 1 1-4.500 4z" fill="#6a5cf0" />
      <circle cx="14.5" cy="4" r="3" fill="none" stroke="#5a6cf5" strokeWidth="2" />
    </svg>
  </ImeBar>
);

const App = () => (
  <>
    <GlobalStyle />
    <Page>
      <QueryHeading>
        <label htmlFor="query">Query</label>
        <Info about="About queries" />
      </QueryHeading>
      <QueryRow>
        <LibraryButton>Library<Triangle color="#889397" /></LibraryButton>
        <QueryInput id="query" placeholder="Type a {query} or an [aggregation] to pre-process your data" />
        <ApplyButton disabled>Apply</ApplyButton>
      </QueryRow>

      <Columns>
        <Sidebar>
          <ChartTypePanel>
            <ChartTypeTitle htmlFor="chart-type">CHART TYPE</ChartTypeTitle>
            <SelectFrame>
              <GeoScatterIcon />
              <ChartSelect id="chart-type" defaultValue="geo"><option value="geo">Geo Scatter</option></ChartSelect>
              <Triangle color="#5c6c75" />
            </SelectFrame>
          </ChartTypePanel>

          <EncodePanel>
            <Tabs role="tablist">
              <Tab role="tab" aria-selected $active>Encode</Tab>
              <Tab role="tab">Filter</Tab>
              <Tab role="tab">Customize</Tab>
            </Tabs>
            <ScrollArea>
              <Sections>
                <SectionTitle>Coordinates</SectionTitle>
                <Card>
                  <Field kind="geo" name="loc" />
                  <AxisTitle>Longitude</AxisTitle>
                  <IndexLabel>Index<IndexInput defaultValue="1" /></IndexLabel>
                  <AxisTitle>Latitude</AxisTitle>
                  <IndexLabel>
                    Index
                    <InputShell><IndexInput defaultValue="0" $focused /><Caret /></InputShell>
                  </IndexLabel>
                </Card>
                <SectionTitle>Color</SectionTitle>
                <Card>
                  <Field kind="string" name="name" />
                  <SwitchLabel><Switch type="checkbox" role="switch" />Binning</SwitchLabel>
                </Card>
                <SectionTitle>Size</SectionTitle>
                <Card>
                  <Field kind="number" name="popularity" />
                  <PlainLabel>Aggregate</PlainLabel>
                </Card>
              </Sections>
              <ScrollTrack>
                <Triangle color="#a3a3a3" up h={5} />
                <ScrollThumb />
                <Triangle color="#505050" h={5} />
              </ScrollTrack>
            </ScrollArea>
          </EncodePanel>
        </Sidebar>

        <Preview>
          <PreviewBar>
            <PreviewLabel>PREVIEW</PreviewLabel>
            <Segments>
              <Segment $active>COMPLETE</Segment>
              <Segment>SUBSET</Segment>
            </Segments>
            <Info about="About previews" />
            <MoreButton aria-label="More options">
              <svg width="16" height="4" viewBox="0 0 16 4" aria-hidden="true">
                <circle cx="2" cy="2" r="2" /><circle cx="8" cy="2" r="2" /><circle cx="14" cy="2" r="2" />
              </svg>
            </MoreButton>
          </PreviewBar>
          <ChartTitle>Enter a title</ChartTitle>
          <ChartDescription>Enter a description</ChartDescription>
          <ChartBody>
            <MapFrame>
              <CampusMap />
              <ZoomControl>
                <ZoomButton aria-label="Zoom in">
                  <svg width="12" height="12" aria-hidden="true"><path d="M0 6h12M6 0v12" stroke="#3d4f58" strokeWidth="2" /></svg>
                </ZoomButton>
                <ZoomButton aria-label="Zoom out">
                  <svg width="12" height="12" aria-hidden="true"><path d="M0 6h12" stroke="#3d4f58" strokeWidth="2" /></svg>
                </ZoomButton>
              </ZoomControl>
              <Attribution>
                <a href="#leaflet">Leaflet</a> | © 1987-2019 HERE | <a href="#terms">Terms of Use</a>
              </Attribution>
            </MapFrame>
            <Legend>
              <LegendTitle>name</LegendTitle>
              <LegendList>
                {legend.map(([name, color]) => <LegendItem key={name} $color={color}>{name}</LegendItem>)}
              </LegendList>
              <LegendTitle>sum ( popularity )</LegendTitle>
              <svg width="120" height="243" aria-hidden="true">
                {sizes.map(([y, r, label]) => (
                  <g key={label}>
                    <circle cx="30" cy={y} r={r} fill="none" stroke="#888" strokeWidth="1.5" />
                    <LegendNumber x="65" y={y + 4}>{label}</LegendNumber>
                  </g>
                ))}
              </svg>
            </Legend>
          </ChartBody>
        </Preview>
      </Columns>
    </Page>

    <Ime />
    <ChatButton aria-label="Open chat">
      <svg width="46" height="42" viewBox="0 0 46 42" fill="none" aria-hidden="true">
        <path d="M6 1h34q4 0 4 4v21q0 4-4 4H20L9 41V30H6q-4 0-4-4V5q0-4 4-4z" stroke="#8b979c" />
        <circle cx="29.5" cy="12" r="3" stroke="#c5cccf" />
        <path d="M24 21c0-6 11-6 11 0z" stroke="#c5cccf" />
        <circle cx="19" cy="12" r="3.5" fill="#00ed64" />
        <path d="M13 22c0-8 12-8 12 0z" fill="#00ed64" />
      </svg>
    </ChatButton>
  </>
);

export default App;
